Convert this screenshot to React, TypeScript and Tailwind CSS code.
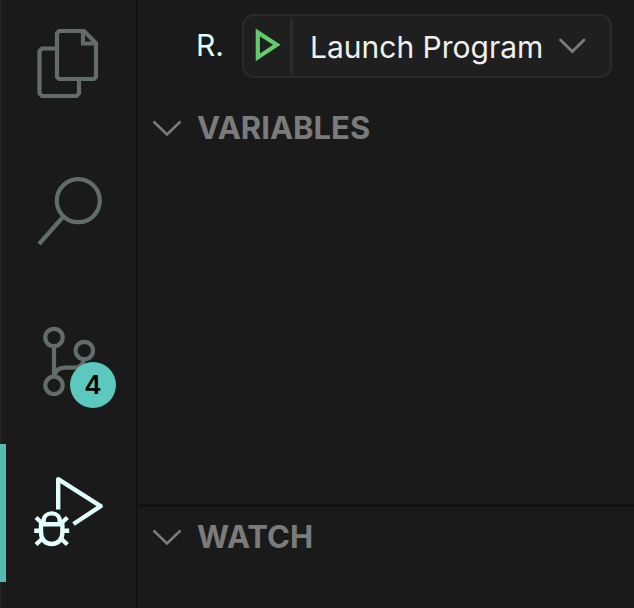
import React from 'react';

const FilesIcon = () => (
  <svg className="h-20 w-20" viewBox="0 0 80 80" fill="none" stroke="currentColor" strokeWidth="4.2" aria-hidden="true">
    <path d="M31 8H56L68 20V54L66 56H31L29 54V10Z" />
    <path d="M55 8V20.5H68" />
    <path d="M29 25.5H14L11.5 28V70.5L14 73H48.5L51 70.5V56" />
  </svg>
);

const SearchIcon = () => (
  <svg className="h-20 w-20" viewBox="0 0 80 80" fill="none" stroke="currentColor" strokeWidth="4.2" aria-hidden="true">
    <circle cx="50.3" cy="27.7" r="21.5" />
    <path d="M35 44L11 71" />
  </svg>
);

const SourceControlIcon = () => (
  <svg className="h-20 w-20" viewBox="0 0 80 80" fill="none" stroke="currentColor" strokeWidth="4.2" aria-hidden="true">
    <circle cx="26" cy="14.5" r="8.7" />
    <circle cx="56.3" cy="27.5" r="8.7" />
    <circle cx="26" cy="62.3" r="8.7" />
    <path d="M26 23V54C27 48 31 44.7 37 44.7H46C52 44.7 55 42 56 36" />
  </svg>
);

const DebugIcon = () => (
  <svg className="h-20 w-20" viewBox="0 0 80 80" fill="none" stroke="currentColor" strokeWidth="4.4" aria-hidden="true">
    <path d="M30.2 36.5V6.2L72.6 33.2L45.5 51" strokeLinejoin="round" />
    <path d="M15.6 51.3V48C15.6 43.5 19 40.4 23.7 40.4S31.8 43.5 31.8 48V51.3" />
    <path d="M13 51.3H34.4V59.5C34.4 66.5 30 71 23.7 71S13 66.5 13 59.5Z" strokeLinejoin="round" />
    <path d="M8 44.5L15 51M39.4 44.5L32.4 51M6.2 57.7H13M34.4 57.7H41.2M8 71.5L15 65M39.4 71.5L32.4 65" />
  </svg>
);

const Chevron = () => (
  <svg
    className="h-4 w-8 shrink-0"
    viewBox="0 0 32 16"
    fill="none"
    stroke="currentColor"
    strokeWidth="2.5"
    aria-hidden="true"
  >
    <path d="M2.5 1.5L16 14.5L29.5 1.5" />
  </svg>
);

const activities = [
  { name: 'Explorer', icon: <FilesIcon />, active: false, badge: null },
  { name: 'Search', icon: <SearchIcon />, active: false, badge: null },
  { name: 'Source Control', icon: <SourceControlIcon />, active: false, badge: 4 },
  { name: 'Run and Debug', icon: <DebugIcon />, active: true, badge: null },
];

const SectionHeader = ({ title }: { title: string }) => (
  <button type="button" className="flex h-15 w-full items-center gap-3.5 pl-[13px] text-left text-[#7b7b7b]">
    <Chevron />
    <span className="text-[31px] leading-10 font-bold">{title}</span>
  </button>
);

const App = () => {
  return (
    <div className="flex min-h-screen overflow-hidden bg-[#1a1a1a] font-['Inter','Liberation_Sans',sans-serif]">
      {/* Activity bar */}
      <nav className="-mt-1.5 flex w-[138px] shrink-0 flex-col gap-3 border-r-2 border-l border-r-[#131313] border-l-[#272727]">
        {activities.map((item) => (
          <button
            key={item.name}
            type="button"
            aria-label={item.name}
            className={`relative flex h-[138px] shrink-0 items-center justify-center pr-0.5 ${
              item.active ? 'text-[#e2ffff]' : 'text-[#616c6b]'
            }`}
          >
            {item.active && <span className="absolute inset-y-0 -left-px w-1.5 bg-[#56bbaf]" />}
            {item.icon}
            {item.badge && (
              <span className="absolute right-5 bottom-6 flex h-[46px] w-[46px] items-center justify-center rounded-full bg-[#5dc8be] text-[26px] leading-none font-semibold text-black">
                {item.badge}
              </span>
            )}
          </button>
        ))}
      </nav>

      {/* Side bar */}
      <main className="flex min-w-0 flex-1 flex-col">
        <header className="flex items-center gap-3.5 pt-3.5 pr-[22px] pb-5 pl-[58px]">
          <h2 className="w-8 pb-0.5 text-[30px] leading-10 text-[#e2ffff]">R.</h2>
          <div className="flex h-16 min-w-0 flex-1 items-center rounded-xl border-2 border-[#2a2a2a] bg-[#1f1f1f]">
            <button type="button" aria-label="Start Debugging" className="flex h-14 w-[49px] shrink-0 items-center justify-center border-r-3 border-[#2a2a2a]">
              <svg className="h-9 w-7" viewBox="0 0 28 36" fill="none" stroke="#62cb6c" strokeWidth="4.2" aria-hidden="true">
                <path d="M4.8 4.4V29.4L23.8 16.8Z" />
              </svg>
            </button>
            <div className="relative min-w-0 flex-1">
              <select
                aria-label="Launch configuration"
                className="h-14 w-full appearance-none bg-transparent pt-0.5 pr-14 pl-[17px] text-[30px] text-[#f0f0f0] outline-none"
              >
                <option>Launch Program</option>
              </select>
              <svg
                className="pointer-events-none absolute top-5 right-6 h-4 w-7 text-[#7b7b7b]"
                viewBox="0 0 28 16"
                fill="none"
                stroke="currentColor"
                strokeWidth="2.8"
                strokeLinecap="round"
                aria-hidden="true"
              >
                <path d="M2.5 2L14.3 13.5L26 2" />
              </svg>
            </div>
          </div>
        </header>

        <section className="flex-1">
          <SectionHeader title="VARIABLES" />
        </section>
        <section className="h-[104px] border-t-3 border-[#131313]">
          <SectionHeader title="WATCH" />
        </section>
      </main>
    </div>
  );
};

export default App;
